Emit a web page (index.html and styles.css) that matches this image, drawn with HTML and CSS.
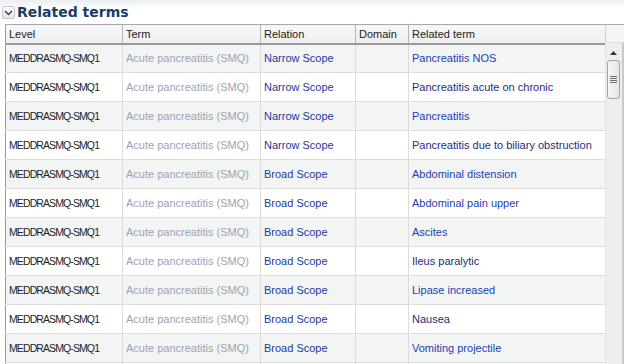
FILE: index.html
```html
<!DOCTYPE html>
<html>
<head>
<meta charset="utf-8">
<link rel="stylesheet" href="styles.css">
</head>
<body>
<div class="panel">
  <div class="title-bar">
    <span class="toggle"><svg width="9" height="6" viewBox="0 0 9 6"><path d="M1 1 L4.5 4.5 L8 1" fill="none" stroke="#3a3f48" stroke-width="1.4"/></svg></span>
    <h2 class="title">Related terms</h2>
  </div>
  <div class="grid">
    <div class="table-area">
      <table class="terms">
        <colgroup>
          <col class="c1"><col class="c2"><col class="c3"><col class="c4"><col class="c5">
        </colgroup>
        <thead>
          <tr><th>Level</th><th>Term</th><th>Relation</th><th>Domain</th><th>Related term</th></tr>
        </thead>
        <tbody>
          <tr><td class="lvl">MEDDRASMQ-SMQ1</td><td class="term">Acute pancreatitis (SMQ)</td><td class="rel">Narrow Scope</td><td></td><td class="rt">Pancreatitis NOS</td></tr>
          <tr><td class="lvl">MEDDRASMQ-SMQ1</td><td class="term">Acute pancreatitis (SMQ)</td><td class="rel">Narrow Scope</td><td></td><td class="rt dark">Pancreatitis acute on chronic</td></tr>
          <tr><td class="lvl">MEDDRASMQ-SMQ1</td><td class="term">Acute pancreatitis (SMQ)</td><td class="rel">Narrow Scope</td><td></td><td class="rt">Pancreatitis</td></tr>
          <tr><td class="lvl">MEDDRASMQ-SMQ1</td><td class="term">Acute pancreatitis (SMQ)</td><td class="rel">Narrow Scope</td><td></td><td class="rt dark">Pancreatitis due to biliary obstruction</td></tr>
          <tr><td class="lvl">MEDDRASMQ-SMQ1</td><td class="term">Acute pancreatitis (SMQ)</td><td class="rel">Broad Scope</td><td></td><td class="rt">Abdominal distension</td></tr>
          <tr><td class="lvl">MEDDRASMQ-SMQ1</td><td class="term">Acute pancreatitis (SMQ)</td><td class="rel">Broad Scope</td><td></td><td class="rt">Abdominal pain upper</td></tr>
          <tr><td class="lvl">MEDDRASMQ-SMQ1</td><td class="term">Acute pancreatitis (SMQ)</td><td class="rel">Broad Scope</td><td></td><td class="rt">Ascites</td></tr>
          <tr><td class="lvl">MEDDRASMQ-SMQ1</td><td class="term">Acute pancreatitis (SMQ)</td><td class="rel">Broad Scope</td><td></td><td class="rt dark">Ileus paralytic</td></tr>
          <tr><td class="lvl">MEDDRASMQ-SMQ1</td><td class="term">Acute pancreatitis (SMQ)</td><td class="rel">Broad Scope</td><td></td><td class="rt">Lipase increased</td></tr>
          <tr><td class="lvl">MEDDRASMQ-SMQ1</td><td class="term">Acute pancreatitis (SMQ)</td><td class="rel">Broad Scope</td><td></td><td class="rt dark">Nausea</td></tr>
          <tr><td class="lvl">MEDDRASMQ-SMQ1</td><td class="term">Acute pancreatitis (SMQ)</td><td class="rel">Broad Scope</td><td></td><td class="rt">Vomiting projectile</td></tr>
          <tr><td></td><td></td><td></td><td></td><td></td></tr>
        </tbody>
      </table>
    </div>
    <div class="scroll-col">
      <div class="scroll-head"></div>
      <div class="scrollbar">
        <svg class="arrow" width="7" height="4" viewBox="0 0 7 4"><path d="M0 4 L3.5 0 L7 4 Z" fill="#333"/></svg>
        <div class="thumb"><span class="grip"></span><span class="grip"></span><span class="grip"></span><span class="grip"></span></div>
      </div>
    </div>
  </div>
</div>
</body>
</html>
```
FILE: styles.css
```css
html, body {
  margin: 0;
  padding: 0;
  background: #ffffff;
  overflow: hidden;
}
body {
  width: 624px;
  height: 364px;
  font-family: "Liberation Sans", Arial, sans-serif;
  font-size: 11px;
  color: #222;
}
.panel {
  display: flex;
  flex-direction: column;
  height: 364px;
}
.title-bar {
  height: 24px;
  display: flex;
  align-items: flex-start;
  gap: 2px;
  padding-left: 2px;
  background: linear-gradient(#eceff3 0px, #f4f6f8 5px, #ffffff 7px);
  box-sizing: border-box;
  padding-top: 4px;
}
.toggle {
  width: 13px;
  height: 13px;
  border: 1px solid #c3c8cf;
  border-radius: 2px;
  background: linear-gradient(#ffffff, #e3e6ea);
  display: flex;
  align-items: center;
  justify-content: center;
  box-sizing: border-box;
  margin-top: 2px;
}
.title {
  margin: 0;
  font-family: "DejaVu Sans", "Liberation Sans", sans-serif;
  font-size: 14px;
  font-weight: bold;
  color: #1b3b68;
  line-height: 16px;
  letter-spacing: 0;
}
.grid {
  display: flex;
  margin-left: 5px;
  flex: 1;
  min-height: 0;
}
.table-area {
  width: 600px;
  overflow: hidden;
}
.terms {
  border-collapse: collapse;
  table-layout: fixed;
  width: 600px;
}
col.c1 { width: 117px; }
col.c2 { width: 138px; }
col.c3 { width: 95px; }
col.c4 { width: 53px; }
col.c5 { width: 197px; }
.terms th {
  height: 19px;
  padding: 0 0 0 3px;
  text-align: left;
  font-weight: normal;
  color: #222;
  background: linear-gradient(#f7f8f9, #eceef0);
  border-top: 1px solid #aaaaaa;
  border-left: 1px solid #b5b5b5;
  border-bottom: 2px solid #9a9a9a;
  white-space: nowrap;
  overflow: hidden;
  box-sizing: border-box;
}
.terms td {
  height: 29px;
  padding: 0 0 0 3px;
  border-left: 1px solid #dcdcdc;
  border-bottom: 1px solid #dddddd;
  white-space: nowrap;
  overflow: hidden;
  box-sizing: border-box;
}
.terms th:first-child, .terms td:first-child {
  border-left: 1px solid #9a9a9a;
}
.terms tbody tr:nth-child(odd) td {
  background: #f3f5f5;
}
.terms tbody tr:nth-child(even) td {
  background: #ffffff;
}
.lvl {
  font-size: 10.5px;
  letter-spacing: -0.9px;
  color: #1e1e1e;
}
.term { color: #9ca3b0; }
.rel { color: #1c3aa0; }
.rt { color: #2140b0; }
.rt.dark { color: #1f2d78; }
.scroll-col {
  width: 19px;
  display: flex;
  flex-direction: column;
}
.scroll-head {
  height: 19px;
  box-sizing: border-box;
  border-top: 1px solid #aaaaaa;
  border-left: 1px solid #d0d0d0;
  border-bottom: 1px solid #dddddd;
  background: #f4f5f6;
}
.scrollbar {
  flex: 1;
  background: #eceef0;
  border-left: 1px solid #e2e4e6;
  border-right: 2px solid #c8cacc;
  display: flex;
  flex-direction: column;
  align-items: center;
  padding-top: 8px;
}
.arrow {
  display: block;
  margin-left: -1px;
}
.thumb {
  margin-top: 5px;
  width: 13px;
  height: 39px;
  box-sizing: border-box;
  border: 1px solid #9ea3a8;
  border-radius: 3px;
  background: linear-gradient(90deg, #f6f7f8, #e2e4e6);
  display: flex;
  flex-direction: column;
  align-items: center;
  justify-content: center;
  gap: 1px;
  margin-left: -1px;
}
.grip {
  display: block;
  width: 7px;
  height: 1px;
  background: #6a6e73;
}
```
